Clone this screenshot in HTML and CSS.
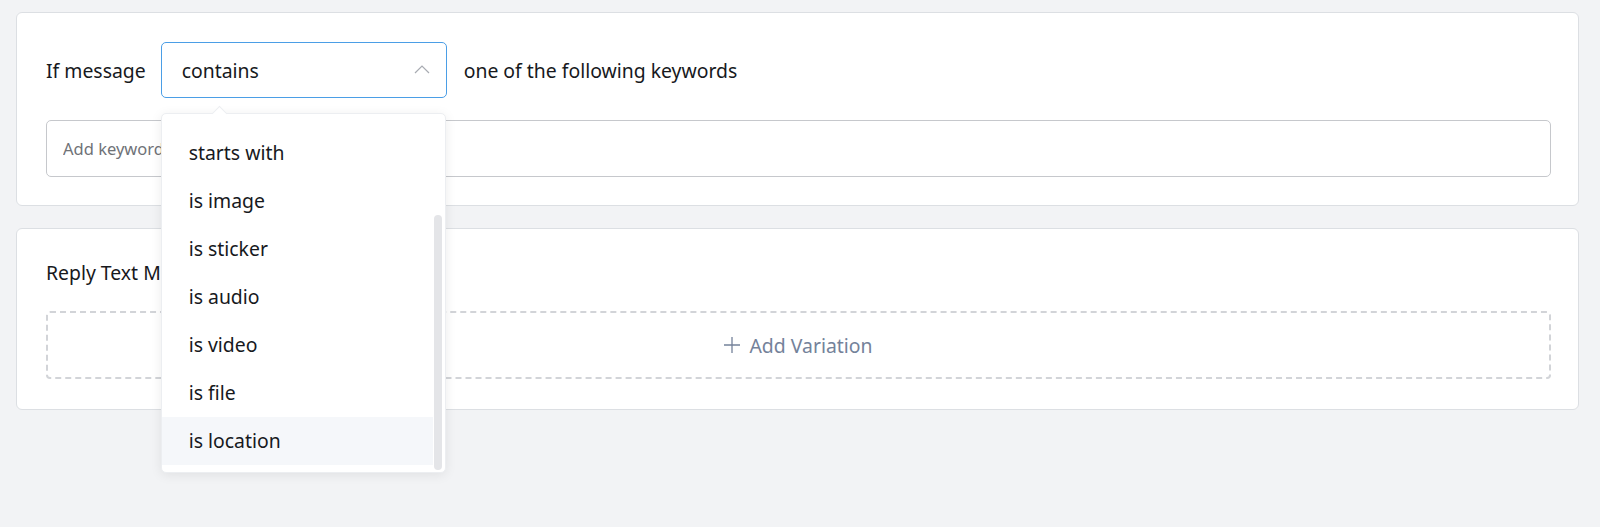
FILE: index.html
```html
<!DOCTYPE html>
<html lang="en">
<head>
    <meta charset="UTF-8">
    <meta name="viewport" content="width=device-width, initial-scale=1.0">
    <title>Keyword Reply Rule</title>
    <link rel="stylesheet" href="styles.css">
</head>
<body>
    <main class="page">
        <section class="card card-rule">
            <div class="rule-row">
                <span class="rule-text rule-label">If message</span>
                <div class="select">
                    <div class="select-box">
                        <span>contains</span>
                        <svg class="chevron" width="16" height="9" viewBox="0 0 16 9">
                            <path d="M1 8 L8 1 L15 8" fill="none" stroke="#a8abb2" stroke-width="1.2"/>
                        </svg>
                    </div>
                    <div class="dropdown">
                        <ul class="options">
                            <li>starts with</li>
                            <li>is image</li>
                            <li>is sticker</li>
                            <li>is audio</li>
                            <li>is video</li>
                            <li>is file</li>
                            <li class="hover">is location</li>
                        </ul>
                        <div class="scroll-thumb"></div>
                    </div>
                </div>
                <span class="rule-text">one of the following keywords</span>
            </div>
            <input class="keywords" type="text" placeholder="Add keywords...">
        </section>

        <section class="card card-reply">
            <h2 class="card-title">Reply Text Message</h2>
            <button class="add-variation" type="button">
                <svg width="16" height="16" viewBox="0 0 16 16">
                    <path d="M8 0 V16 M0 8 H16" stroke="#74829a" stroke-width="1.3"/>
                </svg>
                Add Variation
            </button>
        </section>
    </main>
</body>
</html>
```

FILE: styles.css
```css
html, body {
    min-height: 100vh;
}
body {
    font-family: "Noto Sans", "Open Sans", sans-serif;
    background-color: #f2f3f5;
    color: #17191d;
    margin: 0;
}
.page {
    padding: 12px 21px 0 16px;
    display: flex;
    flex-direction: column;
    gap: 22px;
}
.card {
    background: white;
    border: 1px solid #dcdfe3;
    border-radius: 6px;
    padding: 29px 27px 28px 29px;
}
.card-rule {
    position: relative;
    z-index: 2;
}
.card-reply {
    padding-bottom: 30px;
}
.rule-row {
    display: flex;
    align-items: center;
    gap: 17px;
    margin-bottom: 22px;
}
.rule-text {
    font-size: 19.4px;
}
.rule-label {
    margin-right: -2px;
}
.select {
    position: relative;
}
.select-box {
    box-sizing: border-box;
    width: 286px;
    height: 56px;
    border: 1px solid #4b9ee6;
    border-radius: 5px;
    display: flex;
    align-items: center;
    justify-content: space-between;
    padding: 0 16px 0 20px;
    font-size: 19.4px;
}
.chevron {
    margin-top: -2px;
}
.dropdown {
    position: absolute;
    top: calc(100% + 15px);
    left: 0;
    width: 285px;
    height: 360px;
    background: white;
    border: 1px solid #eceef1;
    border-radius: 5px;
    box-shadow: 0 2px 12px rgba(0, 0, 0, 0.08);
    box-sizing: border-box;
    z-index: 10;
}
.dropdown::before {
    content: "";
    position: absolute;
    top: -6px;
    left: 52px;
    width: 10px;
    height: 10px;
    background: white;
    border-top: 1px solid #eceef1;
    border-left: 1px solid #eceef1;
    transform: rotate(45deg);
}
.options {
    list-style: none;
    margin: 0;
    padding: 15px 12px 0 0;
}
.options li {
    height: 48px;
    line-height: 48px;
    padding-left: 27px;
    font-size: 19.4px;
}
.options li.hover {
    background: #f5f7fa;
}
.scroll-thumb {
    position: absolute;
    top: 101px;
    right: 3px;
    width: 8px;
    height: 255px;
    border-radius: 4px;
    background: #e4e5e8;
}
.keywords {
    display: block;
    width: 100%;
    height: 57px;
    box-sizing: border-box;
    border: 1px solid #c6c8cc;
    border-radius: 5px;
    padding: 0 16px;
    font-family: inherit;
    font-size: 16.5px;
    color: #17191d;
}
.keywords::placeholder {
    color: #6f7277;
}
.card-title {
    font-size: 19.4px;
    font-weight: normal;
    line-height: 30px;
    margin: 0 0 23px 0;
}
.add-variation {
    width: 100%;
    height: 68px;
    border: 2px dashed #d2d4d8;
    border-radius: 4px;
    background: white;
    display: flex;
    align-items: center;
    justify-content: center;
    gap: 9px;
    font-family: inherit;
    font-size: 19.4px;
    color: #74829a;
    cursor: pointer;
}
```
